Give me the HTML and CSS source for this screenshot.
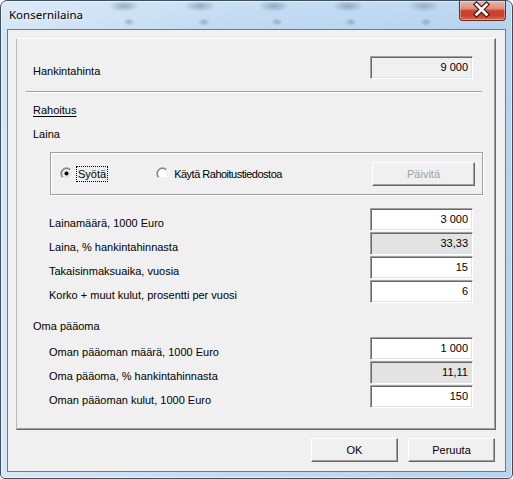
FILE: index.html
```html
<!DOCTYPE html>
<html lang="fi">
<head>
<meta charset="utf-8">
<title>Konsernilaina</title>
<link rel="stylesheet" href="styles.css">
</head>
<body>
<div class="window">
  <div class="titlebar">
    <span class="title">Konsernilaina</span>
    <div class="close">
      <svg width="47" height="19" viewBox="0 0 47 19">
        <path d="M18.5 4.5 L28.5 14.5 M28.5 4.5 L18.5 14.5" stroke="#4a1a14" stroke-width="5" stroke-linecap="square" fill="none"/>
        <path d="M18.5 4.5 L28.5 14.5 M28.5 4.5 L18.5 14.5" stroke="#ffffff" stroke-width="2.6" stroke-linecap="square" fill="none"/>
      </svg>
    </div>
  </div>
  <div class="client">
    <div class="panel">
      <div class="row top-row">
        <span class="label">Hankintahinta</span>
        <div class="field ro">9 000</div>
      </div>
      <div class="sep"></div>
      <div class="heading first"><span class="u">Rahoitus</span></div>
      <div class="heading">Laina</div>
      <div class="group">
        <svg class="radio" width="13" height="13" viewBox="0 0 13 13">
          <circle cx="6.5" cy="6.5" r="5" fill="#e8e8e8"/>
          <path d="M2.26 10.74 A6 6 0 0 1 10.74 2.26" stroke="#a0a0a0" fill="none"/>
          <path d="M10.74 2.26 A6 6 0 0 1 2.26 10.74" stroke="#ffffff" fill="none"/>
          <path d="M2.96 10.04 A5 5 0 0 1 10.04 2.96" stroke="#696969" fill="none"/>
          <path d="M10.04 2.96 A5 5 0 0 1 2.96 10.04" stroke="#e3e3e3" fill="none"/>
          <circle cx="6.5" cy="6.5" r="2" fill="#000"/>
        </svg>
        <span class="rlabel focus">Syötä</span>
        <svg class="radio second" width="13" height="13" viewBox="0 0 13 13">
          <circle cx="6.5" cy="6.5" r="5" fill="#ffffff"/>
          <path d="M2.26 10.74 A6 6 0 0 1 10.74 2.26" stroke="#a0a0a0" fill="none"/>
          <path d="M10.74 2.26 A6 6 0 0 1 2.26 10.74" stroke="#ffffff" fill="none"/>
          <path d="M2.96 10.04 A5 5 0 0 1 10.04 2.96" stroke="#696969" fill="none"/>
          <path d="M10.04 2.96 A5 5 0 0 1 2.96 10.04" stroke="#e3e3e3" fill="none"/>
        </svg>
        <span class="rlabel narrow">Käytä Rahoitustiedostoa</span>
        <div class="btn disabled update">Päivitä</div>
      </div>
      <div class="rows loan">
        <div class="row sub"><span class="label">Lainamäärä, 1000 Euro</span><div class="field">3 000</div></div>
        <div class="row sub"><span class="label">Laina, % hankintahinnasta</span><div class="field calc">33,33</div></div>
        <div class="row sub"><span class="label">Takaisinmaksuaika, vuosia</span><div class="field">15</div></div>
        <div class="row sub"><span class="label">Korko + muut kulut, prosentti per vuosi</span><div class="field">6</div></div>
      </div>
      <div class="heading equity">Oma pääoma</div>
      <div class="rows equity-rows">
        <div class="row sub"><span class="label">Oman pääoman määrä, 1000 Euro</span><div class="field">1 000</div></div>
        <div class="row sub"><span class="label">Oma pääoma, % hankintahinnasta</span><div class="field calc">11,11</div></div>
        <div class="row sub"><span class="label">Oman pääoman kulut, 1000 Euro</span><div class="field">150</div></div>
      </div>
    </div>
    <div class="buttons">
      <div class="btn dlg">OK</div>
      <div class="btn dlg">Peruuta</div>
    </div>
  </div>
</div>
</body>
</html>
```
FILE: styles.css
```css
* { box-sizing: border-box; }
html, body { margin: 0; padding: 0; }
body {
  width: 513px;
  height: 479px;
  overflow: hidden;
  background: #ffffff;
  font-family: "Liberation Sans", Arial, sans-serif;
  font-size: 11px;
  color: #000;
}
.window {
  width: 513px;
  height: 479px;
  border: 1px solid #3e4f62;
  border-radius: 7px 7px 5px 5px;
  display: flex;
  flex-direction: column;
  overflow: hidden;
  box-shadow: inset 0 0 0 1px rgba(255,255,255,0.55);
  background:
    radial-gradient(ellipse 16px 6px at 123px 5px, rgba(70,90,115,0.4), rgba(70,90,115,0) 100%),
    radial-gradient(ellipse 16px 6px at 199px 5px, rgba(70,90,115,0.4), rgba(70,90,115,0) 100%),
    radial-gradient(ellipse 16px 6px at 273px 5px, rgba(70,90,115,0.4), rgba(70,90,115,0) 100%),
    radial-gradient(ellipse 16px 6px at 347px 5px, rgba(70,90,115,0.4), rgba(70,90,115,0) 100%),
    radial-gradient(ellipse 16px 6px at 423px 5px, rgba(70,90,115,0.35), rgba(70,90,115,0) 100%),
    radial-gradient(ellipse 6px 4px at 128px 21px, rgba(70,90,115,0.35), rgba(70,90,115,0) 100%),
    radial-gradient(ellipse 6px 4px at 203px 21px, rgba(70,90,115,0.35), rgba(70,90,115,0) 100%),
    radial-gradient(ellipse 6px 4px at 276px 21px, rgba(70,90,115,0.35), rgba(70,90,115,0) 100%),
    radial-gradient(ellipse 6px 4px at 350px 21px, rgba(70,90,115,0.35), rgba(70,90,115,0) 100%),
    radial-gradient(ellipse 6px 4px at 425px 21px, rgba(70,90,115,0.35), rgba(70,90,115,0) 100%),
    linear-gradient(90deg, rgba(255,255,255,0.35) 0, rgba(255,255,255,0) 45%, rgba(120,170,220,0.15) 100%),
    linear-gradient(180deg, #c9e0f5 0, #bfd9f1 30px, #c3dbf1 100%);
}
.titlebar {
  height: 28px;
  flex: none;
  display: flex;
  align-items: flex-start;
}
.title {
  font-family: "Noto Sans", "Open Sans", sans-serif;
  font-size: 11.5px;
  line-height: 15px;
  margin: 6px 0 0 8px;
  color: #000;
  text-shadow: 0 0 6px rgba(255,255,255,0.9);
}
.close {
  margin-left: auto;
  margin-right: 6px;
  width: 47px;
  height: 20px;
  border: 1px solid #6a2a20;
  border-top: none;
  border-radius: 0 0 4px 4px;
  background: linear-gradient(180deg, #ebb5a8 0, #df8d7b 40%, #c8422d 52%, #c9412b 75%, #d86a4f 100%);
  box-shadow: inset 0 0 0 1px rgba(255,255,255,0.35);
  display: flex;
  align-items: flex-start;
  justify-content: center;
}
.close svg { display: block; margin-top: -1px; margin-left: -2px; }
.client {
  flex: 1;
  margin: 0 6px 6px;
  border: 1px solid #6b7c8e;
  background: #f0f0f0;
  display: flex;
  flex-direction: column;
  padding: 8px 9px 9px 8px;
}
.panel {
  flex: 1;
  display: flex;
  flex-direction: column;
  border-style: solid;
  border-width: 1px;
  border-color: #ffffff #696969 #696969 #b9b9b9;
  box-shadow: inset -1px -1px 0 #a0a0a0;
}
.row {
  display: flex;
  justify-content: space-between;
  align-items: flex-start;
  height: 23px;
  padding: 0 22px 0 16px;
}
.row.sub { padding-left: 32px; }
.top-row { margin-top: 17px; }
.label {
  padding-top: 9px;
  line-height: 13px;
  white-space: nowrap;
}
.field {
  width: 103px;
  height: 23px;
  background: #ffffff;
  border-style: solid;
  border-width: 1px;
  border-color: #a0a0a0 #ffffff #ffffff #a0a0a0;
  box-shadow: inset 1px 1px 0 #696969, inset -1px -1px 0 #e3e3e3;
  text-align: right;
  padding-right: 4px;
  line-height: 20px;
  white-space: nowrap;
}
.field.ro { background: #f0f0f0; }
.field.calc { background: #e3e3e3; }
.sep {
  height: 2px;
  margin: 12px 13px 0 9px;
  border-top: 1px solid #a0a0a0;
  border-bottom: 1px solid #ffffff;
}
.heading {
  line-height: 13px;
  padding-left: 16px;
  margin-top: 11px;
}
.u { text-decoration: underline; text-underline-offset: 2px; }
.group {
  width: 433px;
  height: 43px;
  margin: 11px 0 0 33px;
  border: 1px solid #a0a0a0;
  box-shadow: inset 1px 1px 0 #ffffff, 1px 1px 0 #ffffff;
  display: flex;
  align-items: center;
  padding: 0 7px 0 9px;
}
.radio { display: block; flex: none; }
.radio.second { margin-left: 48px; }
.rlabel {
  margin-left: 3px;
  padding: 0 1px;
  line-height: 14px;
  border: 1px solid transparent;
  white-space: nowrap;
}
.rlabel.narrow { letter-spacing: -0.5px; }
.rlabel.focus { border: 1px dotted #000; }
.btn {
  height: 24px;
  background: #f0f0f0;
  border-style: solid;
  border-width: 1px;
  border-color: #ffffff #696969 #696969 #ffffff;
  box-shadow: inset -1px -1px 0 #a0a0a0;
  text-align: center;
  line-height: 22px;
  white-space: nowrap;
}
.btn.disabled { color: #a0a0a0; }
.update { width: 103px; margin-left: auto; }
.loan { margin-top: 13px; }
.rows { display: flex; flex-direction: column; gap: 1px; }
.heading.equity { margin-top: 17px; }
.equity-rows { margin-top: 4px; }
.buttons {
  flex: none;
  display: flex;
  justify-content: flex-end;
  gap: 10px;
  margin-top: 8px;
  margin-right: 1px;
}
.btn.dlg { width: 87px; padding-top: 1px; line-height: 21px; }
```
